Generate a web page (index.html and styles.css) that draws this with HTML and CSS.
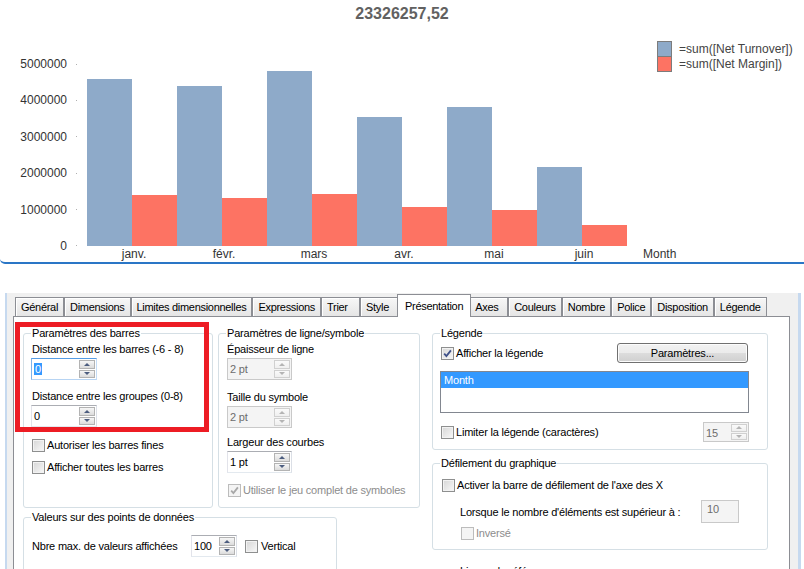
FILE: index.html
```html
<!DOCTYPE html>
<html lang="fr">
<head>
<meta charset="utf-8">
<title>Propriétés du graphique</title>
<link rel="stylesheet" href="styles.css">
</head>
<body>
<section class="chart">
  <h1 class="chart-title">23326257,52</h1>
  <div class="chart-legend">
    <div class="legend-item"><span class="swatch swatch-blue"></span>=sum([Net Turnover])</div>
    <div class="legend-item"><span class="swatch swatch-red"></span>=sum([Net Margin])</div>
  </div>
  <div class="chart-body">
    <div class="y-axis">
      <span>5000000</span>
      <span>4000000</span>
      <span>3000000</span>
      <span>2000000</span>
      <span>1000000</span>
      <span>0</span>
    </div>
    <div class="plot">
      <div class="bar-group"><div class="bar bar-blue" style="height:167px"></div><div class="bar bar-red" style="height:51px"></div></div>
      <div class="bar-group"><div class="bar bar-blue" style="height:160px"></div><div class="bar bar-red" style="height:48px"></div></div>
      <div class="bar-group"><div class="bar bar-blue" style="height:175px"></div><div class="bar bar-red" style="height:52px"></div></div>
      <div class="bar-group"><div class="bar bar-blue" style="height:129px"></div><div class="bar bar-red" style="height:39px"></div></div>
      <div class="bar-group"><div class="bar bar-blue" style="height:139px"></div><div class="bar bar-red" style="height:36px"></div></div>
      <div class="bar-group"><div class="bar bar-blue" style="height:79px"></div><div class="bar bar-red" style="height:21px"></div></div>
    </div>
    <div class="x-axis">
      <span>janv.</span>
      <span>févr.</span>
      <span>mars</span>
      <span>avr.</span>
      <span>mai</span>
      <span>juin</span>
      <span class="x-title">Month</span>
    </div>
  </div>
</section>

<section class="dialog">
  <nav class="tabs">
    <span class="tab">Général</span>
    <span class="tab">Dimensions</span>
    <span class="tab">Limites dimensionnelles</span>
    <span class="tab">Expressions</span>
    <span class="tab">Trier</span>
    <span class="tab">Style</span>
    <span class="tab tab-active">Présentation</span>
    <span class="tab">Axes</span>
    <span class="tab">Couleurs</span>
    <span class="tab">Nombre</span>
    <span class="tab">Police</span>
    <span class="tab">Disposition</span>
    <span class="tab">Légende</span>
  </nav>

  <div class="panel">
    <div class="col-left">
      <div class="groups-row">
        <fieldset class="group group-bars">
          <legend>Paramètres des barres</legend>
          <div class="label label-first">Distance entre les barres (-6 - 8)</div>
          <div class="spin spin-focus spin-wide">
            <span class="spin-val"><span class="sel">0</span></span>
            <span class="spin-btns"><span class="spin-btn spin-up"></span><span class="spin-btn spin-down"></span></span>
          </div>
          <div class="label">Distance entre les groupes (0-8)</div>
          <div class="spin spin-wide">
            <span class="spin-val">0</span>
            <span class="spin-btns"><span class="spin-btn spin-up"></span><span class="spin-btn spin-down"></span></span>
          </div>
          <div class="check check-first"><span class="cb"></span>Autoriser les barres fines</div>
          <div class="check check-next"><span class="cb"></span>Afficher toutes les barres</div>
        </fieldset>

        <fieldset class="group group-line">
          <legend>Paramètres de ligne/symbole</legend>
          <div class="label label-first">Épaisseur de ligne</div>
          <div class="spin spin-disabled spin-mid">
            <span class="spin-val">2 pt</span>
            <span class="spin-btns"><span class="spin-btn spin-up"></span><span class="spin-btn spin-down"></span></span>
          </div>
          <div class="label label-10">Taille du symbole</div>
          <div class="spin spin-disabled spin-mid">
            <span class="spin-val">2 pt</span>
            <span class="spin-btns"><span class="spin-btn spin-up"></span><span class="spin-btn spin-down"></span></span>
          </div>
          <div class="label label-7">Largeur des courbes</div>
          <div class="spin spin-mid">
            <span class="spin-val">1 pt</span>
            <span class="spin-btns"><span class="spin-btn spin-up"></span><span class="spin-btn spin-down"></span></span>
          </div>
          <div class="check check-sym check-disabled"><span class="cb cb-disabled"><svg class="tick" viewBox="0 0 11 11"><path d="M2.2 5.6 4.4 8 8.9 2.4"/></svg></span>Utiliser le jeu complet de symboles</div>
        </fieldset>
      </div>

      <fieldset class="group group-values">
        <legend>Valeurs sur des points de données</legend>
        <div class="values-row">
          <span class="values-label">Nbre max. de valeurs affichées</span>
          <div class="spin spin-small">
            <span class="spin-val">100</span>
            <span class="spin-btns"><span class="spin-btn spin-up"></span><span class="spin-btn spin-down"></span></span>
          </div>
          <div class="check check-inline"><span class="cb"></span>Vertical</div>
        </div>
      </fieldset>
    </div>

    <div class="col-right">
      <fieldset class="group group-legend">
        <legend>Légende</legend>
        <div class="legend-top">
          <div class="check"><span class="cb"><svg class="tick" viewBox="0 0 11 11"><path d="M2.2 5.6 4.4 8 8.9 2.4"/></svg></span>Afficher la légende</div>
          <span class="btn">Paramètres...</span>
        </div>
        <div class="listbox"><div class="list-sel">Month</div></div>
        <div class="legend-limit">
          <div class="check"><span class="cb"></span>Limiter la légende (caractères)</div>
          <div class="spin spin-disabled spin-small spin-short">
            <span class="spin-val">15</span>
            <span class="spin-btns"><span class="spin-btn spin-up"></span><span class="spin-btn spin-down"></span></span>
          </div>
        </div>
      </fieldset>

      <fieldset class="group group-scroll">
        <legend>Défilement du graphique</legend>
        <div class="check scroll-check"><span class="cb"></span>Activer la barre de défilement de l'axe des X</div>
        <div class="scroll-row">
          <span>Lorsque le nombre d'éléments est supérieur à :</span>
          <span class="textbox">10</span>
        </div>
        <div class="check check-disabled scroll-inv"><span class="cb cb-disabled"></span>Inversé</div>
      </fieldset>

      <div class="cut-label">Lignes de référence</div>
    </div>
  </div>

  <div class="highlight-box"></div>
</section>
</body>
</html>
```

FILE: styles.css
```css
* { box-sizing: border-box; }
html, body { margin: 0; padding: 0; }
body {
  width: 804px;
  height: 569px;
  overflow: hidden;
  background: #fff;
  font-family: "Liberation Sans", Arial, sans-serif;
}

/* ---------- chart ---------- */
.chart {
  position: relative;
  height: 264px;
  border-bottom: 2px solid #2a76c6;
  border-bottom-left-radius: 5px;
}
.chart-title {
  margin: 0;
  padding-top: 5px;
  height: 23px;
  font-size: 16px;
  line-height: 18px;
  font-weight: bold;
  color: #616161;
  text-align: center;
}
.chart-legend {
  position: absolute;
  top: 41px;
  left: 657px;
  font-size: 12px;
  color: #444;
}
.legend-item { display: flex; align-items: center; height: 15px; }
.swatch {
  width: 15px;
  height: 16px;
  margin-bottom: -1px;
  border: 1px solid #7c7c7c;
  margin-right: 7px;
}
.swatch-blue { background: #8eaac9; }
.swatch-red { background: #fd7363; }

.chart-body {
  display: grid;
  grid-template-columns: 78px 1fr;
  grid-template-rows: 189px 17px;
  column-gap: 9px;
  margin-top: 34px;
  font-size: 12px;
  color: #333;
}
.y-axis {
  grid-row: 1 / 3;
  grid-column: 1;
  height: 196px;
  display: flex;
  flex-direction: column;
  justify-content: space-between;
}
.y-axis span {
  display: flex;
  justify-content: flex-end;
  align-items: center;
  height: 14px;
  line-height: 14px;
}
.y-axis span::after {
  content: "";
  width: 1px;
  height: 1px;
  background: #b0b0b0;
  margin: 0 1px 0 9px;
}
.plot { grid-row: 1; grid-column: 2; display: flex; align-items: flex-end; }
.bar-group { display: flex; align-items: flex-end; width: 90px; }
.bar { width: 45px; }
.bar-blue { background: #8eaac9; }
.bar-red { background: #fd7363; }
.x-axis { grid-row: 2; grid-column: 2; display: flex; line-height: 17px; }
.x-axis span { width: 90px; text-align: center; padding-left: 4px; }
.x-axis .x-title { width: auto; padding-left: 0; margin-left: 16px; }

/* ---------- dialog ---------- */
.dialog {
  position: relative;
  margin: 29px 0 0 5px;
  width: 796px;
  height: 276px;
  border-left: 2px solid #c6d9ef;
  border-right: 3px solid #c6d9ef;
  background: #f0f0f0;
  padding: 1px 8px 0 6px;
  display: flex;
  flex-direction: column;
  font-size: 11px;
  letter-spacing: -0.2px;
  color: #000;
}
.tabs {
  display: flex;
  align-items: flex-end;
  height: 22px;
  padding-left: 2px;
  position: relative;
  z-index: 1;
}
.tab {
  height: 19px;
  min-width: 39px;
  padding: 0 5px;
  border: 1px solid #8c8e94;
  border-bottom: 0;
  background: linear-gradient(#f7f7f7, #e5e5e5);
  box-shadow: inset 1px 1px 0 #fff;
  display: flex;
  align-items: center;
  white-space: nowrap;
  letter-spacing: -0.3px;
}
.tab-active {
  height: 23px;
  margin: 0 -2px -1px;
  padding: 0 7px 1px;
  background: #fff;
  box-shadow: none;
  position: relative;
}

.panel {
  flex: 1;
  display: flex;
  gap: 12px;
  padding: 9px 0 0 9px;
  background: #fff;
  border: 1px solid #8c8e94;
}
.col-left { width: 397px; flex: none; }
.col-right { width: 336px; flex: none; }
.groups-row { display: flex; gap: 5px; }

.group {
  margin: 0;
  padding: 0 8px;
  border: 1px solid #d5dfe5;
  border-radius: 3px;
  min-width: 0;
}
.group legend {
  padding: 0 1px;
  margin-left: -1px;
  line-height: 14px;
}
.group-bars { width: 190px; height: 182px; flex: none; }
.group-line { width: 202px; height: 182px; flex: none; }
.group-values { width: 314px; height: 70px; margin-top: 2px; }
.group-legend { height: 124px; padding-right: 18px; }
.group-scroll { height: 94px; margin-top: 6px; padding-right: 18px; }

.label { line-height: 14px; margin-top: 9px; white-space: nowrap; }
.label-first { margin-top: 2px; }
.label-10 { margin-top: 10px; }
.label-7 { margin-top: 7px; }

/* spinner */
.spin {
  display: flex;
  height: 22px;
  margin-top: 2px;
  border: 1px solid;
  border-color: #abadb3 #dbdfe6 #e3e9ef #e2e3ea;
  background: #fff;
  padding: 1px;
}
.spin-wide { width: 66px; margin-left: -1px; }
.spin-mid { width: 65px; }
.spin-small { width: 46px; margin-top: 0; }
.spin-short { height: 20px; }
.spin-focus { border-color: #569de5 #c5dcf5 #b7d4f3 #7eb4ea; }
.spin-val { flex: 1; line-height: 18px; padding-left: 1px; white-space: nowrap; }
.spin-btns { display: flex; flex-direction: column; width: 16px; gap: 1px; }
.spin-btn {
  flex: 1;
  border: 1px solid #b3b3b3;
  background: linear-gradient(#f6f6f6, #dcdcdc);
  display: flex;
  align-items: center;
  justify-content: center;
}
.spin-up::after {
  content: "";
  border-left: 3px solid transparent;
  border-right: 3px solid transparent;
  border-bottom: 3px solid #4c5d7f;
}
.spin-down::after {
  content: "";
  border-left: 3px solid transparent;
  border-right: 3px solid transparent;
  border-top: 3px solid #4c5d7f;
}
.spin-disabled { background: #f4f4f4; border-color: #c9c9c9; color: #6d6d6d; }
.spin-disabled .spin-btn { border-color: #d0d0d0; background: linear-gradient(#fafafa, #efefef); }
.spin-disabled .spin-up::after { border-bottom-color: #b4b4b4; }
.spin-disabled .spin-down::after { border-top-color: #b4b4b4; }
.sel { background: #3399ff; color: #fff; padding: 0 1px; }

/* checkbox */
.check {
  display: flex;
  align-items: center;
  gap: 2px;
  height: 14px;
  white-space: nowrap;
}
.check-first { margin-top: 11px; }
.check-next { margin-top: 8px; }
.check-sym { margin-top: 10px; margin-left: 1px; }
.check-disabled { color: #8d8d8d; }
.cb {
  flex: none;
  width: 13px;
  height: 13px;
  border: 1px solid #8e8f8f;
  background: linear-gradient(135deg, #d6d6d6, #f8f8f8);
  box-shadow: inset 0 0 0 1px #f2f2f2;
  display: flex;
  align-items: center;
  justify-content: center;
}
.cb-disabled { border-color: #bcbcbc; background: #f4f4f4; box-shadow: none; }
.tick { width: 11px; height: 11px; }
.tick path { fill: none; stroke: #3f5189; stroke-width: 1.8; }
.cb-disabled .tick path { stroke: #a8a8a8; }

/* légende group */
.legend-top {
  display: flex;
  justify-content: space-between;
  align-items: center;
  height: 20px;
  margin-top: 3px;
}
.btn {
  width: 131px;
  height: 20px;
  margin-right: 1px;
  border: 1px solid #707070;
  border-radius: 3px;
  background: linear-gradient(#f2f2f2, #ebebeb 50%, #dddddd 50%, #cfcfcf);
  box-shadow: inset 0 0 0 1px #fcfcfc;
  display: flex;
  align-items: center;
  justify-content: center;
}
.listbox {
  width: 309px;
  height: 42px;
  margin: 8px 0 0 -1px;
  border: 1px solid #828790;
  background: #fff;
}
.list-sel {
  height: 16px;
  line-height: 16px;
  background: #3399ff;
  color: #fff;
  padding-left: 3px;
}
.legend-limit {
  display: flex;
  justify-content: space-between;
  align-items: center;
  height: 20px;
  margin-top: 9px;
}

/* défilement group */
.scroll-check { margin-top: 8px; margin-left: 1px; }
.scroll-row {
  display: flex;
  align-items: center;
  justify-content: space-between;
  height: 23px;
  margin-top: 8px;
  padding: 0 10px 0 19px;
  white-space: nowrap;
}
.textbox {
  width: 38px;
  height: 23px;
  border: 1px solid #c9c9c9;
  background: #f4f4f4;
  color: #6d6d6d;
  padding-left: 5px;
  line-height: 17px;
}
.scroll-inv { margin-top: 3px; padding-left: 20px; }

/* valeurs group */
.values-row { display: flex; align-items: center; height: 22px; margin-top: 11px; }
.values-label { width: 159px; white-space: nowrap; }
.check-inline { margin-left: 8px; gap: 3px; }

.cut-label { margin-top: 14px; padding-left: 28px; line-height: 14px; }

.highlight-box {
  position: absolute;
  left: 8px;
  top: 29px;
  width: 194px;
  height: 110px;
  border: 5px solid #ed1c24;
  z-index: 2;
}
```
